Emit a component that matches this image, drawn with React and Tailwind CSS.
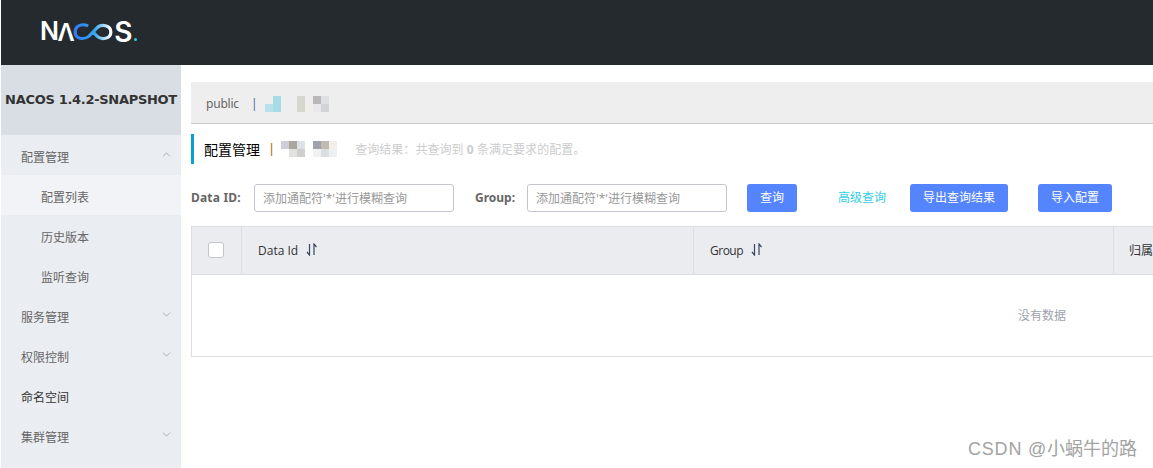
import { ChevronDown, ChevronUp } from 'lucide-react';

const CJK = "font-['Noto_Sans','Noto_Sans_CJK_SC',sans-serif]";

// blurred-out bits of the screenshot, tile colours read off the reference
const MOSAIC_NS = [
  ['', '#a8dbe8'],
  ['#b7e0ea', '#a8dbe8'],
];
const MOSAIC_NAME = [
  ['#d6d6d0', '', '#b9b7b8', '#dfe0e6'],
  ['#d6d6d0', '#f0eeea', '#e9e9ec', '#d2d3d7'],
];
const MOSAIC_A = [
  ['#d0cdd8', '#aaa69f', '#dde2e6'],
  ['', '#e2e2e0', '#cfcfcf'],
];
const MOSAIC_B = [
  ['#a0a3ab', '#c0bbb2', '#f1efe8'],
  ['#f0f1f3', '#dcdfe0', '#eeeff2'],
];

function Mosaic({ rows, size = 8 }) {
  return (
    <svg width={rows[0].length * size} height={rows.length * size} className="block">
      {rows.map((row, y) =>
        row.map((fill, x) =>
          fill ? <rect key={x + '-' + y} x={x * size} y={y * size} width={size} height={size} fill={fill} /> : null
        )
      )}
    </svg>
  );
}

function Logo() {
  return (
    <div className="flex items-center h-[20px] -mt-[2px] text-white font-['Inter',sans-serif] font-semibold text-[25px] leading-none">
      <span>N</span>
      <span className="-ml-[1px] font-['Noto_Sans',sans-serif]">Λ</span>
      <svg width="40" height="20" viewBox="0 0 37 20" preserveAspectRatio="none" fill="none" className="-ml-[1px]">
        <defs>
          <linearGradient id="loop" x1="0" x2="1" y1="0" y2="0">
            <stop offset="0" stopColor="#2f7cf6" />
            <stop offset="0.55" stopColor="#36a6f0" />
            <stop offset="1" stopColor="#ffffff" />
          </linearGradient>
        </defs>
        <path
          d="M14 4 C9 1.5 2 3 2 10 C2 17 10 18.5 15 14 L22 6 C26 1.5 35 3 35 10 C35 17 26 18.5 22 14 L19 10.5"
          stroke="url(#loop)"
          strokeWidth="3"
        />
      </svg>
      <span className="ml-[1px] text-[28px]">S</span>
      <span className="ml-[2px] mt-[15px] w-[3px] h-[3px] rounded-full bg-[#2fd0dc]" />
    </div>
  );
}

function SortIcon({ className }) {
  return (
    <svg width="12" height="13" viewBox="0 0 12 13" fill="none" stroke="#3a4560" strokeWidth="1.2" className={className}>
      <path d="M3.5 1 V12 L1 9" />
      <path d="M8 12 V1 L10.5 4" />
    </svg>
  );
}

function MenuItem({ label, sub, active, open, hasArrow, dark }) {
  const Arrow = open ? ChevronUp : ChevronDown;
  return (
    <div className={`h-[40px] flex items-center justify-between pt-[5px] pr-[8px] text-[12px] ${sub ? 'pl-[40px]' : 'pl-[20px]'} ${active ? 'bg-[#f2f3f7]' : ''} ${dark ? 'text-[#333]' : 'text-[#666]'}`}>
      <span>{label}</span>
      {hasArrow && <Arrow size={13} strokeWidth={1} className="text-[#777] -mt-[7px]" />}
    </div>
  );
}

function Button({ children, className }) {
  return (
    <button className={`h-[28px] rounded-[3px] bg-[#5584ff] text-white text-[12px] ${className}`}>
      {children}
    </button>
  );
}

function SearchInput() {
  return (
    <input
      readOnly
      placeholder="添加通配符'*'进行模糊查询"
      className="w-[200px] h-[28px] px-[8px] rounded-[3px] border border-[#c4c6cf] bg-white text-[12px] placeholder:text-[#999]"
    />
  );
}

export default function App() {
  return (
    <div className={`w-[1153px] h-[468px] overflow-hidden relative bg-white pl-[1px] ${CJK}`}>
      <header className="h-[65px] bg-[#252a2f] flex items-center pl-[39px]">
        <Logo />
      </header>

      <div className="flex h-[403px]">
        <aside className="w-[180px] shrink-0 bg-[#eaedf1]">
          <div className="h-[70px] bg-[#d9dee4] flex items-center justify-center text-[13px] font-bold text-[#333] font-['DejaVu_Sans',sans-serif] whitespace-nowrap tracking-[-0.3px]">
            NACOS 1.4.2-SNAPSHOT
          </div>
          <MenuItem label="配置管理" open hasArrow />
          <MenuItem label="配置列表" sub active />
          <MenuItem label="历史版本" sub />
          <MenuItem label="监听查询" sub />
          <MenuItem label="服务管理" hasArrow />
          <MenuItem label="权限控制" hasArrow />
          <MenuItem label="命名空间" dark />
          <MenuItem label="集群管理" hasArrow />
        </aside>

        <main className="flex-1 min-w-0 pl-[10px] pt-[17px]">
          <div className="h-[42px] bg-[#eeeeee] border-b-[1.5px] border-[#cccccc] flex items-center pt-[2px] pl-[15px] text-[12px] text-[#666]">
            <span className="pt-[1px] tracking-[-0.2px]">public</span>
            <span className="ml-[12px] text-[#5a6a9a]">|</span>
            <span className="ml-[7px]"><Mosaic rows={MOSAIC_NS} /></span>
            <span className="ml-[16px]"><Mosaic rows={MOSAIC_NAME} /></span>
          </div>

          <div className="mt-[10px] h-[30px] border-l-[3px] border-[#09a0cf] flex items-center pl-[10px]">
            <span className="text-[14px] text-black">配置管理</span>
            <span className="ml-[8px] text-[13px] text-[#b06010]">|</span>
            <span className="ml-[6px]"><Mosaic rows={MOSAIC_A} /></span>
            <span className="ml-[8px]"><Mosaic rows={MOSAIC_B} /></span>
            <span className="ml-[18px] pt-[2px] text-[12px] text-[#cccccc] tracking-[0.05px]">
              查询结果：共查询到 <b className="font-bold">0</b> 条满足要求的配置。
            </span>
          </div>

          <div className="mt-[20px] flex items-center h-[28px]">
            <label className="w-[63px] text-[12px] font-bold text-[#666] tracking-[0.2px]">Data ID:</label>
            <SearchInput />
            <label className="ml-[21px] w-[52px] text-[12px] font-bold text-[#666]">Group:</label>
            <SearchInput />
            <Button className="ml-[20px] w-[50px]">查询</Button>
            <span className="ml-[41px] text-[12px] text-[#33cde5]">高级查询</span>
            <Button className="ml-[24px] w-[98px]">导出查询结果</Button>
            <Button className="ml-[30px] w-[74px]">导入配置</Button>
          </div>

          <div className="mt-[14px] w-[1702px] border border-[#dcdee3] border-b-[1.5px]">
            <div className="h-[48px] flex bg-[#ebecf0] border-b border-[#dcdee3] text-[12px] text-[#333]">
              <div className="w-[50px] shrink-0 border-r border-[#dcdee3] flex items-center justify-center pr-[2px]">
                <span className="w-[16px] h-[16px] -mt-[2px] rounded-[3px] border border-[#c4c6cf] bg-white" />
              </div>
              <div className="w-[452px] shrink-0 border-r border-[#dcdee3] flex items-center pl-[16px]">
                <span className="font-['Open_Sans',sans-serif]">Data Id</span>
                <SortIcon className="ml-[8px] -mt-[2px]" />
              </div>
              <div className="w-[420px] shrink-0 border-r border-[#dcdee3] flex items-center pl-[16px]">
                <span className="font-['Open_Sans',sans-serif] tracking-[-0.5px]">Group</span>
                <SortIcon className="ml-[8px] -mt-[2px]" />
              </div>
              <div className="flex-1 flex items-center pl-[15px]">归属应用</div>
            </div>
            <div className="h-[81px] flex items-center justify-center text-[12px] text-[#a0a2ad]">没有数据</div>
          </div>
        </main>
      </div>

      <div className="absolute left-[968px] top-[437px] text-[18px] leading-[24px] text-[#a3a3a3] whitespace-nowrap font-['Liberation_Sans','Noto_Sans_CJK_SC',sans-serif]">
        <span className="tracking-[0.8px]">CSDN @</span>小蜗牛的路
      </div>
    </div>
  );
}
